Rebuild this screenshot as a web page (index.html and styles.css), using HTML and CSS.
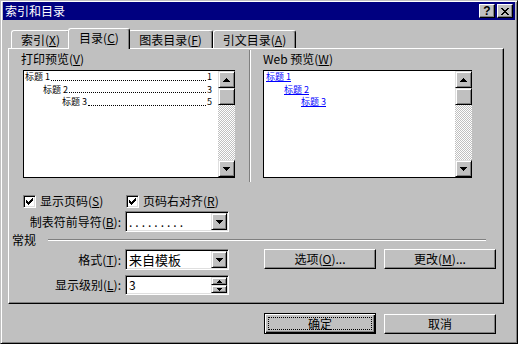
FILE: index.html
```html
<!DOCTYPE html>
<html lang="zh-CN">
<head>
    <meta charset="UTF-8">
    <link rel="stylesheet" href="styles.css">
    <title>索引和目录</title>
</head>
<body>
    <div class="window">
        <div class="titlebar">
            <span class="title">索引和目录</span>
            <div class="tb-buttons">
                <span class="tb-btn help">?</span>
                <span class="tb-btn">
                    <svg width="8" height="7" viewBox="0 0 8 7"><path d="M0 0h2v1h-2zM6 0h2v1h-2zM1 1h2v1h-2zM5 1h2v1h-2zM2 2h4v1h-4zM3 3h2v1h-2zM2 4h4v1h-4zM1 5h2v1h-2zM5 5h2v1h-2zM0 6h2v1h-2zM6 6h2v1h-2z" fill="#000"/></svg>
                </span>
            </div>
        </div>

        <div class="tabs">
            <div class="tab first">索引(<u>X</u>)</div>
            <div class="tab active">目录(<u>C</u>)</div>
            <div class="tab third">图表目录(<u>F</u>)</div>
            <div class="tab fourth">引文目录(<u>A</u>)</div>
        </div>

        <div class="panel">
            <div class="previews">
                <div class="col-print">
                    <div class="caption">打印预览(<u>V</u>)</div>
                    <div class="preview print-box">
                        <div class="page">
                            <div class="toc-line"><span>标题 1</span><i class="leader"></i><span>1</span></div>
                            <div class="toc-line lv2"><span>标题 2</span><i class="leader"></i><span>3</span></div>
                            <div class="toc-line lv3"><span>标题 3</span><i class="leader"></i><span>5</span></div>
                        </div>
                        <div class="scrollbar">
                            <div class="sb-btn"><svg width="7" height="4" viewBox="0 0 7 4"><path d="M3 0h1v1h-1zM2 1h3v1h-3zM1 2h5v1h-5zM0 3h7v1h-7z"/></svg></div>
                            <div class="sb-btn"></div>
                            <div class="sb-track"></div>
                            <div class="sb-btn"><svg width="7" height="4" viewBox="0 0 7 4"><path d="M0 0h7v1h-7zM1 1h5v1h-5zM2 2h3v1h-3zM3 3h1v1h-1z"/></svg></div>
                        </div>
                    </div>
                </div>
                <div class="vsep"></div>
                <div class="col-web">
                    <div class="caption">Web 预览(<u>W</u>)</div>
                    <div class="preview web-box">
                        <div class="page web-page">
                            <a class="web-link">标题 1</a>
                            <a class="web-link lv2">标题 2</a>
                            <a class="web-link lv3">标题 3</a>
                        </div>
                        <div class="scrollbar">
                            <div class="sb-btn"><svg width="7" height="4" viewBox="0 0 7 4"><path d="M3 0h1v1h-1zM2 1h3v1h-3zM1 2h5v1h-5zM0 3h7v1h-7z"/></svg></div>
                            <div class="sb-btn"></div>
                            <div class="sb-track"></div>
                            <div class="sb-btn"><svg width="7" height="4" viewBox="0 0 7 4"><path d="M0 0h7v1h-7zM1 1h5v1h-5zM2 2h3v1h-3zM3 3h1v1h-1z"/></svg></div>
                        </div>
                    </div>
                </div>
            </div>

            <div class="checks">
                <div class="check first">
                    <span class="box"><svg width="7" height="7" viewBox="0 0 7 7"><path d="M6 0h1v1h-1zM5 1h2v1h-2zM0 2h1v1h-1zM4 2h3v1h-3zM0 3h2v1h-2zM3 3h3v1h-3zM0 4h5v1h-5zM1 5h3v1h-3zM2 6h1v1h-1z"/></svg></span>
                    <span>显示页码(<u>S</u>)</span>
                </div>
                <div class="check">
                    <span class="box"><svg width="7" height="7" viewBox="0 0 7 7"><path d="M6 0h1v1h-1zM5 1h2v1h-2zM0 2h1v1h-1zM4 2h3v1h-3zM0 3h2v1h-2zM3 3h3v1h-3zM0 4h5v1h-5zM1 5h3v1h-3zM2 6h1v1h-1z"/></svg></span>
                    <span>页码右对齐(<u>R</u>)</span>
                </div>
            </div>

            <div class="field-row">
                <span class="field-label">制表符前导符(<u>B</u>):</span>
                <div class="select">
                    <span class="value dots">.........</span>
                    <span class="drop-btn"><svg width="7" height="4" viewBox="0 0 7 4"><path d="M0 0h7v1h-7zM1 1h5v1h-5zM2 2h3v1h-3zM3 3h1v1h-1z"/></svg></span>
                </div>
            </div>

            <div class="group-title">
                <span>常规</span>
                <span class="groove"></span>
            </div>

            <div class="field-row">
                <span class="field-label">格式(<u>T</u>):</span>
                <div class="select">
                    <span class="value big">来自模板</span>
                    <span class="drop-btn"><svg width="7" height="4" viewBox="0 0 7 4"><path d="M0 0h7v1h-7zM1 1h5v1h-5zM2 2h3v1h-3zM3 3h1v1h-1z"/></svg></span>
                </div>
                <button class="btn options">选项(<u>O</u>)...</button>
                <button class="btn">更改(<u>M</u>)...</button>
            </div>

            <div class="field-row level">
                <span class="field-label">显示级别(<u>L</u>):</span>
                <div class="select spin">
                    <span class="value">3</span>
                    <span class="spin-btns">
                        <span class="spin-btn"><svg width="5" height="3" viewBox="0 0 5 3"><path d="M2 0h1v1h-1zM1 1h3v1h-3zM0 2h5v1h-5z"/></svg></span>
                        <span class="spin-btn"><svg width="5" height="3" viewBox="0 0 5 3"><path d="M0 0h5v1h-5zM1 1h3v1h-3zM2 2h1v1h-1z"/></svg></span>
                    </span>
                </div>
            </div>
        </div>

        <div class="actions">
            <button class="btn default">确定</button>
            <button class="btn cancel">取消</button>
        </div>
    </div>
</body>
</html>
```

FILE: styles.css
```css
*{
    margin: 0;
    padding: 0;
    box-sizing: border-box;
}

body{
    width: 518px;
    height: 344px;
    overflow: hidden;
    background: #c0c0c0;
    color: #000;
    font-family: "Noto Sans CJK SC", "Liberation Sans", sans-serif;
    font-size: 12px;
    line-height: 14px;
}

.window{
    width: 518px;
    height: 344px;
    border: 1px solid;
    border-color: #c0c0c0 #000 #000 #c0c0c0;
    box-shadow: inset 1px 1px #fff, inset -1px -1px #808080;
    padding: 1px 2px 2px 2px;
}

/* title bar */
.titlebar{
    height: 18px;
    background: #000080;
    display: flex;
    align-items: center;
    padding: 0 2px 0 2px;
}
.titlebar .title{
    color: #fff;
    font-size: 12px;
}
.tb-buttons{
    margin-left: auto;
    display: flex;
    gap: 2px;
}
.tb-btn{
    width: 16px;
    height: 14px;
    background: #c0c0c0;
    border: 1px solid;
    border-color: #fff #000 #000 #fff;
    box-shadow: inset -1px -1px #808080;
    display: flex;
    align-items: center;
    justify-content: center;
}
.tb-btn.help{
    font-family: "Liberation Sans", sans-serif;
    font-weight: bold;
    font-size: 12px;
    line-height: 12px;
}

/* tabs */
.tabs{
    margin-top: 8px;
    height: 20px;
    display: flex;
    align-items: flex-end;
    padding-left: 8px;
}
.tab{
    height: 18px;
    border: 1px solid;
    border-bottom: none;
    border-color: #fff #000 #000 #fff;
    border-radius: 3px 3px 0 0;
    box-shadow: inset -1px 0 #808080;
    background: #c0c0c0;
    display: flex;
    align-items: center;
    justify-content: center;
    white-space: nowrap;
}
.tab.first{ width: 59px; }
.tab.active{
    width: 62px;
    height: 21px;
    margin: 0 -2px -1px;
    padding-bottom: 2px;
    position: relative;
    z-index: 1;
}
.tab.third{ width: 85px; }
.tab.fourth{ width: 83px; }

/* tab body */
.panel{
    margin-left: 5px;
    width: 496px;
    height: 256px;
    border: 1px solid;
    border-color: #fff #000 #000 #fff;
    box-shadow: inset -1px -1px #808080;
}

.previews{
    display: flex;
    padding: 3px 0 0 12px;
}
.col-print{ width: 214px; }
.col-print .preview{ margin-left: 2px; width: 212px; }
.vsep{
    width: 2px;
    height: 132px;
    margin: -2px 0 0 14px;
    border-left: 1px solid #808080;
    border-right: 1px solid #fff;
}
.col-web{ margin-left: 12px; }
.col-web .preview{ width: 209px; }

.caption{
    height: 14px;
    margin-bottom: 4px;
    white-space: nowrap;
}

.preview{
    height: 108px;
    display: flex;
    border: 1px solid #000;
    border-right: none;
}
.page{
    flex: 1;
    background: #fff;
    padding: 0 6px 0 1px;
    font-size: 9px;
    line-height: 12.5px;
}
.toc-line{
    display: flex;
    white-space: nowrap;
}
.toc-line.lv2{ padding-left: 18px; }
.toc-line.lv3{ padding-left: 37px; }
.leader{
    flex: 1;
    align-self: flex-end;
    margin: 0 1px 3px;
    border-bottom: 1px dotted #000;
}
.web-page{ padding-left: 2px; }
.web-link{
    display: block;
    color: #00f;
    text-decoration: underline;
}
.web-link.lv2{ padding-left: 18px; }
.web-link.lv3{ padding-left: 35px; }

.scrollbar{
    width: 17px;
    display: flex;
    flex-direction: column;
}
.sb-btn{
    height: 17px;
    background: #c0c0c0;
    border: 1px solid;
    border-color: #dfdfdf #000 #000 #dfdfdf;
    box-shadow: inset 1px 1px #fff, inset -1px -1px #808080;
    display: flex;
    align-items: center;
    justify-content: center;
}
.sb-track{
    flex: 1;
    background: repeating-conic-gradient(#fff 0 25%, #c0c0c0 0 50%) 0 0 / 2px 2px;
}

/* checkboxes */
.checks{
    display: flex;
    align-items: center;
    height: 16px;
    margin-top: 11px;
    padding-left: 14px;
}
.check{
    display: flex;
    align-items: center;
    gap: 4px;
    white-space: nowrap;
}
.check.first{ width: 103px; }
.box{
    width: 13px;
    height: 13px;
    background: #fff;
    border: 1px solid;
    border-color: #808080 #fff #fff #808080;
    box-shadow: inset 1px 1px #000, inset -1px -1px #dfdfdf;
    display: flex;
    align-items: center;
    justify-content: center;
}

/* fields */
.field-row{
    display: flex;
    align-items: center;
    height: 21px;
    margin-top: 2px;
}
.field-row.level{
    height: 20px;
    margin-top: 5px;
}
.field-label{
    width: 112px;
    margin-right: 4px;
    text-align: right;
    white-space: nowrap;
}
.select{
    width: 104px;
    height: 21px;
    background: #fff;
    border: 1px solid;
    border-color: #808080 #fff #fff #808080;
    box-shadow: inset 1px 1px #000, inset -1px -1px #dfdfdf;
    padding: 1px;
    display: flex;
    align-items: center;
}
.select.spin{ height: 20px; }
.select .value{
    flex: 1;
    padding-left: 2px;
    white-space: nowrap;
}
.select .dots{
    letter-spacing: 3px;
    line-height: 10px;
}
.select .big{
    font-size: 13px;
}
.drop-btn, .spin-btn{
    background: #c0c0c0;
    border: 1px solid;
    border-color: #dfdfdf #000 #000 #dfdfdf;
    box-shadow: inset 1px 1px #fff, inset -1px -1px #808080;
    display: flex;
    align-items: center;
    justify-content: center;
}
.drop-btn{
    width: 16px;
    height: 17px;
}
.spin-btns{
    display: flex;
    flex-direction: column;
}
.spin-btn{
    width: 16px;
    height: 8px;
}

.group-title{
    display: flex;
    align-items: center;
    height: 14px;
    margin-top: 1px;
    padding-left: 3px;
}
.groove{
    flex: 1;
    height: 2px;
    margin: 0 17px 0 12px;
    border-top: 1px solid #808080;
    border-bottom: 1px solid #fff;
}

/* buttons */
.btn{
    width: 112px;
    height: 20px;
    background: #c0c0c0;
    border: 1px solid;
    border-color: #fff #000 #000 #fff;
    box-shadow: inset -1px -1px #808080;
    font-family: inherit;
    font-size: 12px;
    line-height: 14px;
    color: #000;
}
.btn.options{
    margin-left: 35px;
    margin-right: 8px;
}
.field-row .btn{ align-self: flex-start; }

.actions{
    display: flex;
    align-items: flex-start;
    gap: 8px;
    margin-top: 9px;
    padding-left: 261px;
}
.btn.default{
    height: 21px;
    border-color: #000;
    box-shadow: inset 1px 1px #fff, inset -1px -1px #000, inset -2px -2px #808080;
    outline: 1px dotted #000;
    outline-offset: -5px;
}
.btn.cancel{
    margin-top: 1px;
}
```
